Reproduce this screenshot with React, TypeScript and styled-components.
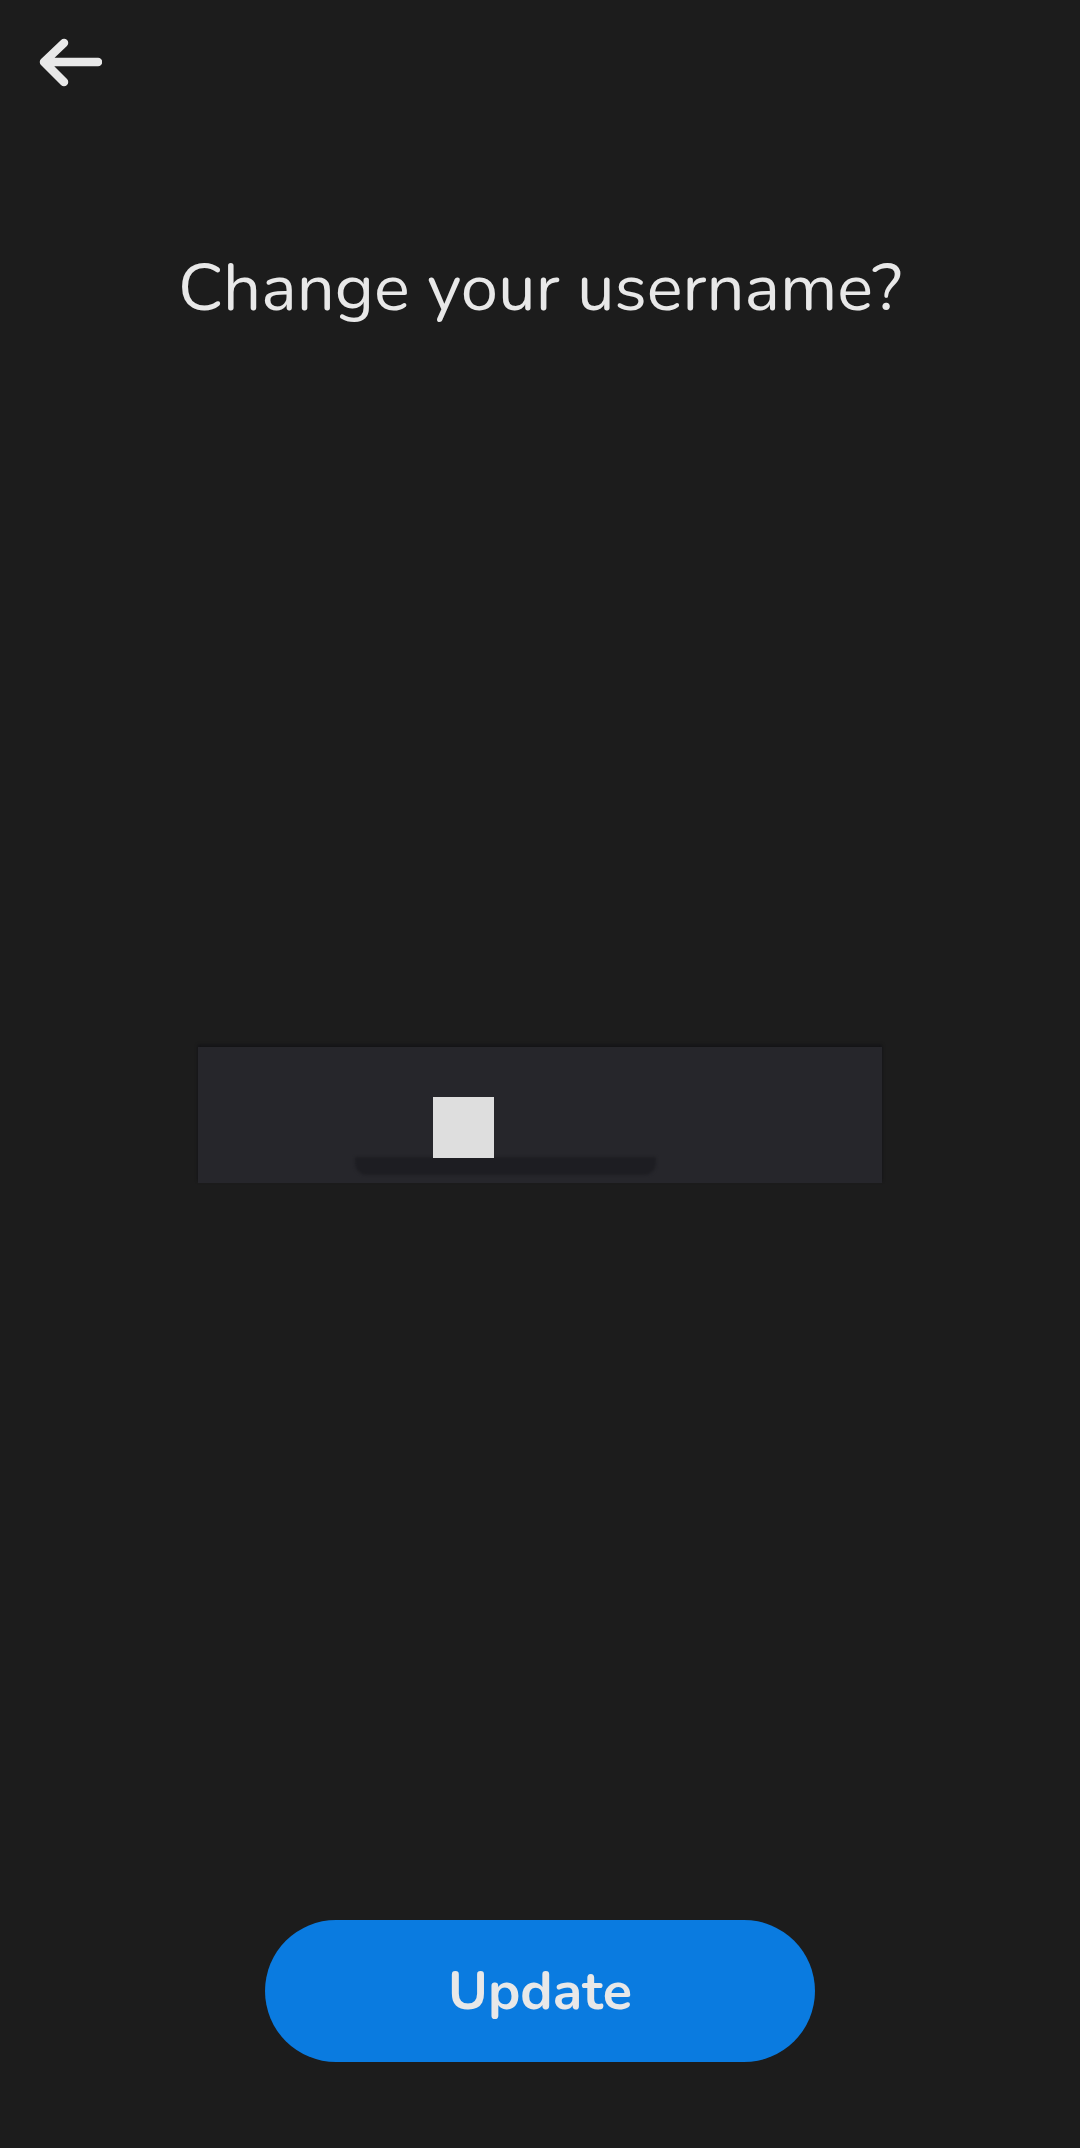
import { createGlobalStyle, styled } from "styled-components";

const GlobalStyle = createGlobalStyle`
  html, body {
    margin: 0;
    padding: 0;
    background: #1c1c1c;
  }
  body {
    font-family: "Nunito", Lato, "Noto Sans", sans-serif;
  }
`;

const App = () => {
  return (
    <Page>
      <GlobalStyle />
      <Header>
        <BackButton aria-label="Back">
          <svg width="64" height="52" viewBox="0 0 64 52" fill="none">
            <path
              d="M60 24H6M26 5L6 24L26 44"
              stroke="#e8e8e8"
              strokeWidth="8.5"
              strokeLinecap="round"
              strokeLinejoin="round"
            />
          </svg>
        </BackButton>
      </Header>

      <Title>Change your username?</Title>

      <Middle>
        <InputBox>
          <Field>
            <Cursor />
            <Underline />
          </Field>
        </InputBox>
      </Middle>

      <Footer>
        <UpdateButton>Update</UpdateButton>
      </Footer>
    </Page>
  );
};

export default App;

const Page = styled("div")({
  minHeight: "100vh",
  display: "flex",
  flexDirection: "column",
  background: "#1c1c1c",
  color: "#e8e8e8",
});

const Header = styled("div")({
  display: "flex",
  alignItems: "center",
  padding: "38px 0 0 38px",
  height: "52px",
});

const BackButton = styled("button")({
  background: "none",
  border: "none",
  padding: 0,
  display: "flex",
  cursor: "pointer",
});

const Title = styled("h1")({
  margin: "158px 0 0",
  textAlign: "center",
  fontSize: "67px",
  fontWeight: 400,
  lineHeight: "80px",
  color: "#e8e8e8",
});

const Middle = styled("div")({
  flex: 1,
  display: "flex",
  alignItems: "center",
  justifyContent: "center",
  paddingBottom: "18px",
});

const InputBox = styled("div")({
  width: "684px",
  height: "136px",
  background: "#26262b",
  boxShadow: "0 -2px 3px rgba(10,10,16,0.5)",
  display: "flex",
  paddingLeft: "157px",
  boxSizing: "border-box",
});

const Field = styled("div")({
  width: "301px",
  paddingTop: "50px",
  display: "flex",
  flexDirection: "column",
});

const Cursor = styled("div")({
  width: "61px",
  height: "61px",
  marginLeft: "78px",
  background: "#dedede",
  position: "relative",
  zIndex: 1,
});

const Underline = styled("div")({
  height: "18px",
  marginTop: "-1px",
  background: "#1d1d22",
  borderRadius: "0 0 12px 12px",
  filter: "blur(1.5px)",
});

const Footer = styled("div")({
  display: "flex",
  justifyContent: "center",
  paddingBottom: "86px",
});

const UpdateButton = styled("button")({
  width: "550px",
  height: "142px",
  borderRadius: "71px",
  border: "none",
  background: "#0a7be0",
  color: "#e8e8e8",
  fontFamily: '"Nunito", Lato, "Noto Sans", sans-serif',
  fontSize: "54px",
  fontWeight: 700,
  cursor: "pointer",
});
